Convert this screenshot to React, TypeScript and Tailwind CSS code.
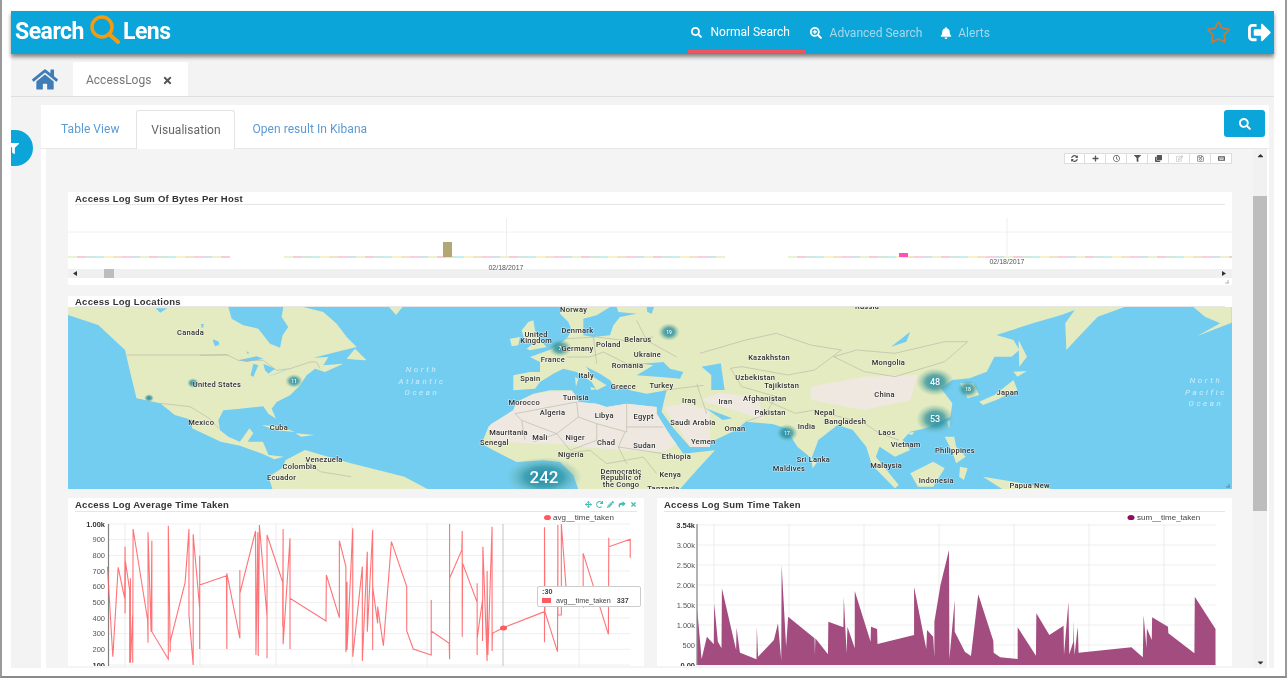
import {
  FaBell,
  FaCaretDown,
  FaCaretUp,
  FaClone,
  FaFilter,
  FaHome,
  FaKeyboard,
  FaPencilAlt,
  FaPlus,
  FaRedo,
  FaRegClock,
  FaRegEdit,
  FaRegSave,
  FaSearch,
  FaSearchPlus,
  FaShare,
  FaSignOutAlt,
  FaSyncAlt,
  FaTimes,
  FaArrowsAlt,
} from "react-icons/fa";
import { Star } from "lucide-react";

type Pt = number[];

// map outlines were read off crops of the map, so points stay in crop coordinates
const west = (pts: Pt[]) => pts.map(([x, y]) => [60 + x / 2.613, 300 + y / 3]);
const east = (pts: Pt[]) => pts.map(([x, y]) => [650 + x / 2.613, 300 + y / 3]);
const us = (pts: Pt[]) => pts.map(([x, y]) => [200 + x / 3, 307 + y / 3]);
const eu = (pts: Pt[]) => pts.map(([x, y]) => [450 + x / 3, 307 + y / 3]);
const str = (pts: Pt[]) => pts.map((p) => p.join(",")).join(" ");

const northAmerica = [
  ...west([[0, 21]]),
  ...us([
    [85, 0], [95, 35], [130, 55], [175, 65], [210, 110], [240, 122], [248, 85], [265, 60], [245, 30], [250, 0], [310, 0],
    [370, 15], [410, 50], [440, 90], [470, 120], [430, 130], [340, 152], [385, 150], [370, 175], [430, 170], [375, 195],
    [345, 185], [320, 205], [300, 235], [270, 265], [230, 285], [215, 305], [228, 335], [205, 320], [190, 298], [120, 305],
    [70, 310], [55, 340], [60, 370],
  ]),
  ...west([
    [440, 410], [470, 425], [495, 385], [505, 400], [490, 425], [530, 425], [545, 465], [585, 470], [560, 478],
    [530, 462], [470, 437], [420, 425], [345, 385], [345, 360], [300, 345], [262, 310], [200, 295], [185, 225],
    [170, 150], [100, 75], [21, 45], [0, 45],
  ]),
];
const southAmerica = west([
  [590, 480], [640, 450], [700, 470], [760, 490], [830, 510], [900, 530], [960, 567], [555, 567], [545, 530], [580, 505],
]);
const eurasia = [
  ...eu([[190, 205], [240, 195], [270, 195], [270, 165], [240, 150], [300, 128], [350, 95], [365, 70], [355, 45], [330, 20], [335, 0]]),
  ...east([
    [1240, 21], [1170, 50], [1120, 110], [1088, 150], [1085, 70], [1110, 30], [1075, 45], [1000, 70], [905, 105],
    [950, 120], [965, 150], [945, 170], [900, 170], [880, 215], [835, 235], [790, 240], [760, 265], [790, 310],
    [785, 350], [720, 385], [680, 395], [660, 420], [680, 450], [640, 470], [600, 440], [590, 470], [650, 555],
    [640, 565], [580, 495], [565, 440], [530, 390], [490, 375], [440, 420], [422, 475], [385, 440], [355, 385],
    [320, 372], [250, 365], [225, 390], [170, 420],
  ]),
  ...eu([
    [720, 420], [670, 363], [635, 315], [640, 290], [650, 250], [590, 260], [540, 250], [520, 235], [500, 250], [480, 220],
    [450, 200], [410, 180], [405, 175], [430, 210], [470, 235], [440, 250], [425, 225], [380, 195], [340, 185], [310, 200],
    [270, 225], [255, 245], [190, 250],
  ]),
];
const africa = eu([
  [115, 360], [125, 350], [190, 310], [200, 285], [250, 260], [300, 250], [365, 250], [385, 275], [385, 285], [440, 290],
  [470, 300], [530, 290], [620, 300], [620, 320], [660, 385], [700, 440], [795, 430], [740, 490], [690, 546], [385, 546],
  [370, 505], [330, 465], [280, 460], [200, 465], [130, 430], [95, 410],
]);
const islands = [
  us([[185, 355], [240, 358], [285, 375], [230, 370]]),
  us([[440, 155], [465, 125], [500, 160], [470, 158]]),
  west([[615, 400], [665, 405], [630, 410]]),
  west([[860, 21], [895, 21], [878, 45]]),
  eu([[215, 70], [235, 45], [250, 40], [255, 70], [270, 100], [290, 120], [240, 130], [230, 125], [255, 105], [225, 105]]),
  eu([[180, 95], [210, 90], [205, 115], [185, 118]]),
  eu([[420, 240], [440, 245], [425, 250]]),
  eu([[375, 210], [385, 215], [378, 240]]),
  east([[1420, 21], [1520, 21], [1520, 68], [1430, 108], [1490, 70], [1450, 50]]),
  east([[860, 305], [900, 285], [950, 240], [960, 270], [905, 300], [870, 315]]),
  east([[950, 215], [985, 213], [960, 230]]),
  east([[963, 120], [985, 170], [965, 200]]),
  east([[810, 250], [845, 250], [860, 285], [830, 295]]),
  east([[775, 365], [785, 360], [782, 385]]),
  east([[670, 400], [690, 395], [685, 405]]),
  east([[770, 410], [795, 410], [800, 440], [825, 470], [800, 490], [790, 455]]),
  east([[680, 520], [740, 485], [770, 505], [740, 560], [700, 560]]),
  east([[810, 500], [830, 505], [820, 540], [808, 530]]),
  east([[870, 530], [950, 545], [1050, 567], [920, 567]]),
  east([[420, 470], [435, 490], [425, 505]]),
];
const beige = [
  eu([[125, 400], [115, 360], [125, 350], [190, 310], [200, 285], [250, 262], [300, 255], [365, 252], [385, 285], [440, 290], [470, 300], [530, 290], [620, 300], [620, 320], [660, 385], [680, 412], [640, 435], [520, 430], [400, 420], [320, 410], [240, 410]]),
  eu([[640, 300], [700, 290], [780, 310], [780, 420], [722, 420], [690, 370]]),
  east([[130, 300], [300, 360], [280, 290], [180, 280]]),
  east([[420, 260], [560, 230], [700, 225], [680, 300], [560, 330], [420, 300]]),
];
const water = [
  eu([[560, 205], [610, 175], [580, 170], [640, 165], [660, 185], [700, 195], [690, 215], [630, 210]]),
  eu([[400, 35], [440, 25], [480, 0], [500, 0], [505, 15], [560, 20], [510, 30], [490, 55], [480, 85], [430, 90], [400, 85]]),
  eu([[590, 0], [612, 0], [605, 20], [592, 15]]),
  east([[135, 200], [185, 190], [195, 270], [160, 270], [160, 225]]),
  east([[145, 325], [215, 355], [190, 360]]),
  east([[630, 140], [680, 95], [670, 125]]),
  us([[115, 160], [170, 148], [190, 155], [140, 165]]),
  us([[160, 170], [175, 175], [160, 210], [152, 205]]),
  us([[190, 170], [225, 185], [205, 200], [195, 190]]),
  us([[200, 210], [255, 190], [270, 185], [230, 200]]),
  us([[38, 98], [55, 115], [45, 118]]),
  us([[5, 50], [12, 60], [4, 62]]),
  us([[140, 133], [148, 138], [142, 140]]),
  west([[400, 118], [415, 125], [416, 136], [402, 130]]),
  west([[368, 72], [376, 72], [372, 82]]),
  west([[250, 25], [280, 25], [262, 38]]),
];
const borders = [
  west([[175, 165], [440, 165]]),
  us([[0, 145], [80, 143], [115, 160], [190, 160], [230, 190], [270, 185], [330, 165], [350, 165], [360, 185]]),
  west([[262, 310], [340, 320], [390, 355], [415, 385]]),
  west([[640, 480], [680, 515], [760, 530]]),
  eu([[195, 320], [380, 285], [385, 330], [320, 380], [215, 340], [195, 320]]),
  eu([[215, 340], [225, 400]]),
  eu([[320, 380], [250, 405]]),
  eu([[320, 380], [360, 430], [440, 400], [440, 350], [385, 330]]),
  eu([[440, 350], [530, 375], [530, 290]]),
  eu([[530, 360], [640, 360]]),
  eu([[525, 375], [505, 420], [530, 470]]),
  eu([[505, 420], [640, 440]]),
  eu([[330, 440], [420, 430], [470, 470], [580, 450], [620, 500]]),
  eu([[350, 95], [440, 90], [520, 100], [610, 90]]),
  eu([[350, 150], [420, 150], [460, 135], [530, 170], [600, 170]]),
  eu([[430, 90], [440, 170]]),
  eu([[560, 40], [590, 100], [680, 150]]),
  eu([[640, 250], [760, 235]]),
  eu([[740, 230], [770, 320]]),
  east([[130, 160], [250, 120], [330, 100], [420, 135], [500, 150], [430, 210], [360, 225], [240, 200], [210, 205]]),
  east([[480, 170], [540, 150], [640, 160], [770, 125], [830, 125], [770, 185], [640, 230], [560, 215], [480, 170]]),
  east([[300, 300], [380, 340], [430, 330], [560, 370], [600, 400], [650, 420]]),
  east([[210, 205], [240, 260], [330, 290], [300, 345], [250, 365]]),
];
const westLabels: [string, number, number][] = [
  ["Canada", 341, 97], ["United States", 410, 252], ["Mexico", 369, 368], ["Cuba", 572, 381], ["Venezuela", 690, 477],
  ["Colombia", 626, 500], ["Ecuador", 579, 533], ["Norway", 1342, 28], ["Denmark", 1352, 92], ["United", 1244, 102],
  ["Kingdom", 1244, 121], ["Germany", 1352, 145], ["Poland", 1433, 134], ["Belarus", 1510, 119], ["Ukraine", 1535, 162],
  ["France", 1288, 177], ["Romania", 1483, 195], ["Italy", 1375, 225], ["Spain", 1229, 236], ["Greece", 1472, 258],
  ["Morocco", 1213, 307], ["Tunisia", 1348, 293], ["Algeria", 1287, 338], ["Libya", 1422, 346], ["Egypt", 1525, 350],
  ["Mauritania", 1172, 396], ["Mali", 1254, 412], ["Niger", 1346, 412], ["Chad", 1427, 426], ["Sudan", 1527, 436],
  ["Senegal", 1135, 427], ["Nigeria", 1335, 464], ["Democratic", 1466, 514], ["Republic of", 1466, 533], ["the Congo", 1466, 552],
];
const eastLabels: [string, number, number][] = [
  ["Russia", 567, 20], ["Kazakhstan", 311, 173], ["Mongolia", 623, 186], ["Uzbekistan", 275, 231], ["Turkey", 30, 255],
  ["Tajikistan", 344, 256], ["Afghanistan", 300, 296], ["China", 613, 283], ["Japan", 934, 276], ["Iraq", 102, 301],
  ["Iran", 197, 305], ["Pakistan", 314, 338], ["Nepal", 456, 337], ["Saudi Arabia", 112, 366], ["India", 409, 380],
  ["Bangladesh", 510, 365], ["Oman", 222, 385], ["Yemen", 139, 423], ["Laos", 619, 396], ["Vietnam", 668, 433],
  ["Philippines", 797, 450], ["Ethiopia", 69, 470], ["Sri Lanka", 427, 477], ["Malaysia", 617, 497], ["Maldives", 363, 505],
  ["Kenya", 53, 522], ["Indonesia", 748, 540], ["Papua New", 992, 557], ["Tanzania", 35, 566],
];
// x, y, rx, ry, count, font size
const clusters: [number, number, number, number, string, number][] = [
  [149, 398, 5, 4, "", 0],
  [193, 383, 6, 5, "", 0],
  [294, 381, 9, 7, "11", 5],
  [560, 348, 12, 9, "7", 5],
  [669, 332, 11, 9, "19", 5],
  [935, 382, 19, 14, "48", 9],
  [968, 389, 11, 9, "18", 5],
  [935, 419, 19, 15, "53", 9],
  [787, 433, 11, 9, "17", 5],
  [544, 477, 38, 20, "242", 17],
];

const avgLine: Pt[] = [
  [124, 215], [138, 485], [152, 217], [169, 310], [170, 155], [170, 355], [171, 200], [182, 285], [182, 503], [184, 250],
  [184, 503], [190, 360], [190, 503], [191, 102], [229, 375], [230, 443], [230, 112], [238, 410], [240, 137], [240, 410],
  [283, 492], [283, 92], [288, 470], [288, 440], [327, 262], [337, 102], [337, 360], [348, 510], [348, 118], [365, 340],
  [365, 462], [365, 182], [365, 270], [435, 242], [436, 462], [436, 235], [470, 430], [470, 225], [470, 295], [511, 108],
  [512, 480], [517, 112], [518, 483], [521, 90], [541, 365], [541, 490], [541, 120], [582, 262], [582, 395], [583, 102],
  [583, 448], [601, 130], [601, 462], [601, 310], [695, 378], [696, 240], [730, 368], [730, 137], [747, 215], [747, 472],
  [750, 260], [750, 465], [765, 100], [765, 485], [790, 215], [790, 498], [803, 170], [803, 410], [817, 105], [817, 465],
  [817, 275], [830, 385], [830, 335], [845, 452], [866, 140], [906, 275], [906, 408], [923, 462], [970, 480], [970, 315],
  [970, 408], [1017, 445], [1018, 493], [1018, 87], [1018, 250], [1050, 165], [1051, 108], [1051, 425], [1052, 205], [1090, 322],
  [1090, 480], [1090, 265], [1090, 430], [1104, 315], [1104, 438], [1105, 155], [1116, 498], [1116, 228], [1118, 480], [1129, 95],
  [1129, 468], [1130, 415], [1158, 398], [1266, 350], [1266, 442], [1266, 97], [1267, 350], [1300, 470], [1301, 90], [1301, 360],
  [1310, 360], [1310, 87], [1322, 272], [1367, 335], [1367, 175], [1433, 418], [1434, 128], [1434, 155], [1490, 133], [1490, 188],
].map(([x, y]) => [60 + x / 2.613, 495 + y / 3]);

const sumArea: Pt[] = [
  [116, 510], [116, 340], [127, 492], [140, 425], [157, 448], [158, 325], [167, 440], [176, 460], [177, 280], [212, 465],
  [213, 398], [221, 470], [222, 473], [262, 493], [263, 395], [266, 485], [305, 435], [315, 385], [323, 495], [324, 210],
  [335, 455], [340, 365], [405, 430], [406, 480], [407, 430], [438, 478], [439, 380], [476, 397], [477, 305], [484, 475],
  [486, 395], [504, 460], [504, 288], [543, 440], [544, 395], [559, 402], [560, 447], [650, 420], [650, 275], [680, 462],
  [682, 405], [697, 425], [700, 487], [700, 380], [715, 270], [736, 165], [737, 492], [750, 315], [750, 410], [775, 470],
  [790, 483], [808, 298], [845, 437], [846, 473], [862, 487], [905, 492], [905, 397], [950, 482], [951, 355], [983, 420],
  [1018, 392], [1019, 480], [1030, 320], [1032, 478], [1042, 440], [1042, 375], [1045, 480], [1053, 395], [1055, 473], [1185, 457],
  [1213, 487], [1215, 360], [1222, 460], [1223, 400], [1235, 435], [1236, 367], [1275, 395], [1276, 415], [1340, 475], [1341, 305],
  [1392, 402], [1392, 510],
].map(([x, y]) => [650 + x / 2.4615, 495 + y / 3]);

const avgTicks = ["1.00k", "900", "800", "700", "600", "500", "400", "300", "200", "100"];
const avgGrid = [125, 200, 276, 352, 427, 503, 579];
const sumTicks = ["3.54k", "3.00k", "2.50k", "2.00k", "1.50k", "1.00k", "500", "0.00"];
const sumGrid = [714, 789, 864, 939, 1014, 1089, 1164];
const pastel = ["#f8cbdc", "#d5e6dc", "#c4f0ee", "#fbf2c8", "#f3e3c8", "#f9cfe6", "#cfe4e8", "#e8f3cf"];
const toolIcons = [FaSyncAlt, FaPlus, FaRegClock, FaFilter, FaClone, FaRegEdit, FaRegSave, FaKeyboard];

const baseline = () => {
  const cells = [];
  for (let x = 68; x < 1232; x += 9) {
    if ((x > 222 && x < 281) || (x > 722 && x < 781)) continue;
    cells.push(<rect key={x} x={x} y={256} width={9} height={2} fill={pastel[Math.floor(x / 9) % 8]} />);
  }
  return cells;
};

const PanelTitle = ({ title, className }: { title: string; className: string }) => (
  <div className={`mx-[7px] flex items-center border-b border-[#e6e6e6] pt-[2px] text-[9.5px] font-bold tracking-[0.25px] text-[#333] font-['Liberation_Sans',sans-serif] ${className}`}>
    {title}
  </div>
);

const BytesChart = () => (
  <svg viewBox="68 205 1164 80" className="block h-[80px] w-[1164px] font-['Liberation_Sans',sans-serif]">
    <line x1={68} x2={1232} y1={232} y2={232} stroke="#f2f2f2" />
    <line x1={506.5} x2={506.5} y1={218} y2={258} stroke="#eeeeee" />
    <line x1={1007} x2={1007} y1={218} y2={258} stroke="#eeeeee" />
    {baseline()}
    <rect x={443} y={242} width={9} height={15} fill="#b3a874" />
    <rect x={899} y={253} width={9} height={4} fill="#ff4fb8" />
    <rect x={68} y={269} width={1164} height={9} fill="#f0f0f0" />
    <text x={506} y={269.5} textAnchor="middle" fontSize={7} fill="#555">02/18/2017</text>
    <text x={1007} y={264} textAnchor="middle" fontSize={7} fill="#555">02/18/2017</text>
    <rect x={104} y={269} width={10} height={9} fill="#bdbdbd" />
    <polygon points="73,273.5 77,271 77,276" fill="#333" />
    <polygon points="1226,273.5 1222,271 1222,276" fill="#333" />
    <path d="M1225 283h4M1228 280v3" stroke="#999" strokeWidth={0.7} fill="none" />
  </svg>
);

const LocationMap = () => (
  <svg viewBox="68 307 1164 182" className="block h-[182px] w-[1164px] font-['Roboto',sans-serif]">
    <defs>
      <radialGradient id="cluster">
        <stop offset="0%" stopColor="#12809f" stopOpacity={0.9} />
        <stop offset="50%" stopColor="#2a8f9a" stopOpacity={0.7} />
        <stop offset="100%" stopColor="#7fb8a0" stopOpacity={0} />
      </radialGradient>
    </defs>
    <rect x={68} y={307} width={1164} height={182} fill="#73cdf1" />
    <polygon points={str(northAmerica)} fill="#e4ebc1" />
    <polygon points={str(southAmerica)} fill="#e4ebc1" />
    <polygon points={str(eurasia)} fill="#e4ebc1" />
    <polygon points={str(africa)} fill="#e4ebc1" />
    {islands.map((p, i) => <polygon key={i} points={str(p)} fill="#e4ebc1" />)}
    {beige.map((p, i) => <polygon key={i} points={str(p)} fill="#eee8e1" />)}
    {water.map((p, i) => <polygon key={i} points={str(p)} fill="#73cdf1" />)}
    {borders.map((p, i) => <polyline key={i} points={str(p)} fill="none" stroke="#b5b3a5" strokeWidth={0.6} />)}
    {clusters.map(([x, y, rx, ry]) => <ellipse key={x} cx={x} cy={y} rx={rx} ry={ry} fill="url(#cluster)" />)}
    {westLabels.map(([t, x, y]) => (
      <text key={t} x={60 + x / 2.613} y={302.5 + y / 3} textAnchor="middle" fontSize={7.5} fontWeight={500} letterSpacing={0.25} fill="#2f2f2f" stroke="#ffffff" strokeOpacity={0.55} strokeWidth={1.2} paintOrder="stroke">{t}</text>
    ))}
    {eastLabels.map(([t, x, y]) => (
      <text key={t} x={650 + x / 2.613} y={302.5 + y / 3} textAnchor="middle" fontSize={7.5} fontWeight={500} letterSpacing={0.25} fill="#2f2f2f" stroke="#ffffff" strokeOpacity={0.55} strokeWidth={1.2} paintOrder="stroke">{t}</text>
    ))}
    {["North", "Atlantic", "Ocean"].map((t, i) => (
      <text key={t} x={422} y={372 + i * 11.7} textAnchor="middle" fontSize={8} fontStyle="italic" letterSpacing={2.6} fill="#cdeefa">{t}</text>
    ))}
    {["North", "Pacific", "Ocean"].map((t, i) => (
      <text key={t} x={1206} y={383 + i * 11.7} textAnchor="middle" fontSize={8} fontStyle="italic" letterSpacing={2.6} fill="#cdeefa">{t}</text>
    ))}
    {clusters.map(([x, y, , , n, size]) => n && (
      <text key={x} x={x} y={y + size * 0.36} textAnchor="middle" fontSize={size} fontWeight={500} fill="#ffffff">{n}</text>
    ))}
    <path d="M1226 487h4M1229 484v3" stroke="#667" strokeWidth={0.7} fill="none" />
  </svg>
);

const AvgChart = () => (
  <svg viewBox="68 512 576 154" className="block h-[154px] w-[576px] font-['Liberation_Sans',sans-serif]">
    {avgTicks.map((t, i) => {
      const y = 524 + i * 15.67;
      return (
        <g key={t}>
          <line x1={108} x2={630} y1={y} y2={y} stroke="#efefef" />
          <text x={105} y={y + 2.5} textAnchor="end" fontSize={7.5} fontWeight={i === 0 || i === 9 ? 700 : 400} fill={i === 0 || i === 9 ? "#333" : "#555"}>{t}</text>
        </g>
      );
    })}
    {avgGrid.map((x) => (
      <line key={x} x1={x} x2={x} y1={524} y2={666} stroke={x === 503 ? "#c4c4c4" : "#ececec"} />
    ))}
    <line x1={108.5} x2={108.5} y1={524} y2={666} stroke="#808080" strokeWidth={1.2} />
    <polyline points={str(avgLine)} fill="none" stroke="#ff5a5f" strokeWidth={1.1} strokeOpacity={0.85} />
    <ellipse cx={503.5} cy={628} rx={3.5} ry={2.5} fill="#ff5a5f" />
    <ellipse cx={547.5} cy={517.5} rx={3.5} ry={2.6} fill="#ff5a5f" />
    <text x={553} y={520} fontSize={8} fill="#444">avg__time_taken</text>
  </svg>
);

const SumChart = () => (
  <svg viewBox="657 512 575 154" className="block h-[154px] w-[575px] font-['Liberation_Sans',sans-serif]">
    {sumTicks.map((t, i) => {
      const y = i === 0 ? 525 : 545 + (i - 1) * 20;
      return (
        <g key={t}>
          <line x1={697} x2={1216} y1={y} y2={y} stroke="#efefef" />
          <text x={695} y={y + 2.5} textAnchor="end" fontSize={7.5} fontWeight={i === 0 || i === 7 ? 700 : 400} fill={i === 0 || i === 7 ? "#333" : "#555"}>{t}</text>
        </g>
      );
    })}
    {sumGrid.map((x) => <line key={x} x1={x} x2={x} y1={524} y2={665} stroke="#ececec" />)}
    <polygon points={str(sumArea)} fill="#a34c80" />
    <line x1={697} x2={697} y1={524} y2={665} stroke="#808080" strokeWidth={1.2} />
    <ellipse cx={1131} cy={517.5} rx={3.5} ry={2.6} fill="#8e0f5d" />
    <text x={1137} y={520} fontSize={8} fill="#444">sum__time_taken</text>
  </svg>
);

export default function App() {
  return (
    <div className="h-[678px] w-[1287px] overflow-hidden border-x-2 border-b-2 border-x-[#9a9a9a] border-b-[#8a8a8a] bg-white pb-[8px] pl-[9px] pr-[11px] pt-[11px] font-['Roboto',sans-serif] blur-[0.5px]">
      <div className="relative flex h-full flex-col bg-[#f3f3f3]">
        {/* Top bar */}
        <header className="relative z-10 flex h-[43px] shrink-0 bg-[#0ba5d9] shadow-[0_3px_4px_rgba(0,0,0,0.45)]">
          <div className="ml-[4px] flex items-center pb-[2px] text-[23px] font-bold leading-none tracking-[-0.5px] text-white">
            <span>Search</span>
            <svg viewBox="0 0 32 32" className="ml-[4px] mr-[3px] mt-[-5px] h-[32px] w-[32px]">
              <circle cx="14" cy="14" r="10" fill="none" stroke="#f39c12" strokeWidth="3.5" />
              <path d="M21 21l9 8" stroke="#f39c12" strokeWidth="4" strokeLinecap="round" />
            </svg>
            <span>Lens</span>
          </div>
          <nav className="ml-[517px] flex text-[12px]">
            <a className="mb-[1px] flex w-[117px] items-center border-b-[3px] border-[#f0555f] pl-[3px] pt-[3px] text-white">
              <FaSearch className="h-[11px] w-[11px]" />
              <span className="ml-[9px]">Normal Search</span>
            </a>
            <a className="ml-[5px] flex items-center text-[#a6d8ea]">
              <FaSearchPlus className="h-[12px] w-[12px] text-white" />
              <span className="ml-[8px]">Advanced Search</span>
            </a>
            <a className="ml-[18px] flex items-center text-[#a6d8ea]">
              <FaBell className="h-[12px] w-[12px] text-white" />
              <span className="ml-[6px]">Alerts</span>
            </a>
          </nav>
          <div className="ml-auto mr-[3px] flex items-center gap-[17px]">
            <Star className="h-[25px] w-[25px] text-[#c47a3d]" strokeWidth={1.8} />
            <FaSignOutAlt className="h-[23px] w-[23px] text-white" />
          </div>
        </header>

        {/* Opened tabs */}
        <div className="flex h-[43px] shrink-0 items-end border-b border-[#dedede] pl-[21px]">
          <FaHome className="mb-[4px] h-[25px] w-[26px] text-[#3f7cb8]" />
          <div className="ml-[15px] flex h-[34px] w-[115px] items-center rounded-t-[2px] bg-white pl-[13px] pt-[2px] text-[12px] text-[#777]">
            AccessLogs
            <FaTimes className="ml-[11px] h-[11px] w-[11px] text-[#555]" />
          </div>
        </div>

        {/* Filter toggle */}
        <div className="absolute left-0 top-[119px] z-10 flex h-[36px] w-[22px] items-center overflow-hidden rounded-r-full bg-[#0ba5d9]">
          <FaFilter className="ml-[-3px] h-[11px] w-[11px] shrink-0 text-white" />
        </div>

        <div className="flex min-h-0 flex-1 pl-[30px] pr-[5px] pt-[8px]">
          <div className="flex min-w-0 flex-1 flex-col bg-white">
            {/* View tabs */}
            <div className="flex h-[44px] shrink-0 items-end border-b border-[#e8e8e8] pl-[5px] pr-[4px] text-[12px] tracking-[0.05px] text-[#5b9bd5]">
              <span className="mb-[10px] ml-[15px]">Table View</span>
              <span className="mb-[-1px] ml-[17px] flex h-[39px] w-[99px] items-center justify-center rounded-t-[3px] border border-b-0 border-[#e3e3e3] bg-white text-[#666]">
                Visualisation
              </span>
              <span className="mb-[10px] ml-[17px]">Open result In Kibana</span>
              <button className="mb-[11px] ml-auto flex h-[27px] w-[41px] items-center justify-center rounded-[3px] bg-[#0ba5d9] text-white">
                <FaSearch className="h-[12px] w-[12px]" />
              </button>
            </div>

            <div className="flex min-h-0 flex-1 pl-[5px] pr-[2px]">
              <div className="min-w-0 flex-1 overflow-hidden bg-[#f4f4f4] pl-[22px]">
                {/* Dashboard toolbar */}
                <div className="flex h-[43px] w-[1164px] items-start justify-end pt-[4px]">
                  {toolIcons.map((Icon, i) => (
                    <span key={i} className="flex h-[11px] w-[21px] items-center justify-center border border-l-0 border-[#dddddd] bg-white first:border-l">
                      <Icon className={i === 5 ? "h-[7px] w-[7px] text-[#bbb]" : "h-[7px] w-[7px] text-[#555]"} />
                    </span>
                  ))}
                </div>

                <section className="w-[1164px] bg-white">
                  <PanelTitle title="Access Log Sum Of Bytes Per Host" className="h-[13px]" />
                  <BytesChart />
                </section>

                <section className="mt-[11px] w-[1164px] bg-white">
                  <PanelTitle title="Access Log Locations" className="h-[11px]" />
                  <LocationMap />
                </section>

                <div className="mt-[9px] flex w-[1164px] gap-[13px]">
                  <section className="relative w-[576px] shrink-0 bg-white">
                    <PanelTitle title="Access Log Average Time Taken" className="h-[14px]" />
                    <div className="absolute right-[7px] top-[3px] flex gap-[4px] text-[#3cc0b4]">
                      <FaArrowsAlt className="h-[7px] w-[7px]" />
                      <FaRedo className="h-[7px] w-[7px]" />
                      <FaPencilAlt className="h-[7px] w-[7px]" />
                      <FaShare className="h-[7px] w-[8px]" />
                      <FaTimes className="h-[7px] w-[7px]" />
                    </div>
                    <AvgChart />
                    <div className="absolute left-[469px] top-[88px] h-[21px] w-[104px] rounded-[2px] border border-[#cccccc] bg-white px-[4px] font-['Liberation_Sans',sans-serif] text-[7.2px] leading-[9px] text-[#444]">
                      <div className="font-bold">:30</div>
                      <div className="flex items-center">
                        <span className="h-[5px] w-[9px] bg-[#ff5a5f]" />
                        <span className="ml-[5px]">avg__time_taken</span>
                        <span className="ml-[6px] font-bold">337</span>
                      </div>
                    </div>
                  </section>
                  <section className="w-[575px] shrink-0 bg-white">
                    <PanelTitle title="Access Log Sum Time Taken" className="h-[14px]" />
                    <SumChart />
                  </section>
                </div>
              </div>

              {/* Scrollbar */}
              <div className="flex w-[14px] shrink-0 flex-col items-center bg-[#f1f1f1] text-[#333]">
                <div className="h-[47px] w-full pt-[2px]">
                  <FaCaretUp className="mx-auto h-[9px] w-[9px]" />
                </div>
                <div className="h-[315px] w-full bg-[#bdbdbd]" />
                <FaCaretDown className="mb-[1px] mt-auto h-[9px] w-[9px]" />
              </div>
            </div>
          </div>
        </div>
      </div>
    </div>
  );
}
